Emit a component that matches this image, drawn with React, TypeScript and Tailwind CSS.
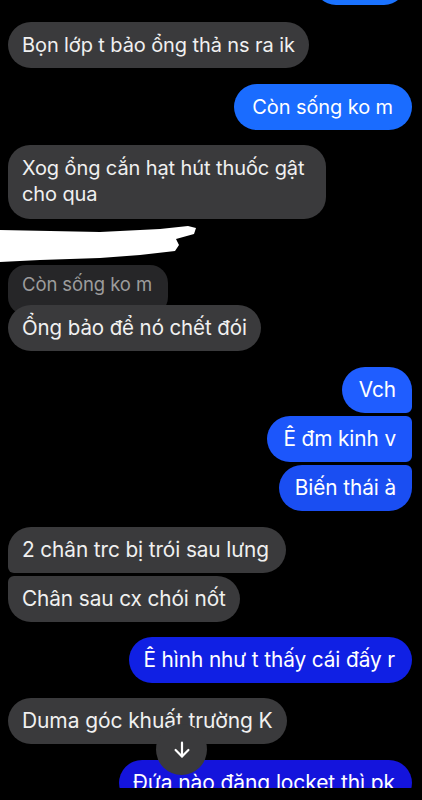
import React from "react";

const font = { fontFamily: "Inter, 'Noto Sans', 'Liberation Sans', sans-serif" };

function Gray({ children, cls = "" }: { children: React.ReactNode; cls?: string }) {
  return (
    <div className={`self-start bg-[#3a3a3c] text-[#f0f0f0] leading-[26px] px-[14px] py-[10px] ${cls}`}>
      {children}
    </div>
  );
}

function Blue({ children, cls = "", color }: { children: React.ReactNode; cls?: string; color: string }) {
  return (
    <div className={`self-end text-white leading-[26px] px-[16px] py-[10px] ${color} ${cls}`}>
      {children}
    </div>
  );
}

export default function App() {
  return (
    <div className="relative w-[422px] h-[800px] overflow-hidden bg-black" style={font}>
      <div className="flex flex-col pl-[8px] pr-[10px] tracking-[-0.1px]">
        {/* partial top bubble */}
        <Blue color="bg-[#1a72ff]" cls="text-[20px] -mt-[41px] w-[92px] h-[46px] rounded-[22px] mr-[6px]">
          <span className="opacity-0">.</span>
        </Blue>

        <Gray cls="text-[20px] mt-[17px] rounded-[23px]">Bọn lớp t bảo ổng thả ns ra ik</Gray>

        <Blue color="bg-[#1a6cff]" cls="text-[20px] mt-[16px] rounded-[23px] pl-[18px] pr-[19px]">Còn sống ko m</Blue>

        <Gray cls="text-[20px] mt-[15px] rounded-[22px] pt-[10px] pb-[12px] pr-[22px]">
          Xog ổng cắn hạt hút thuốc gật
          <br />
          cho qua
        </Gray>

        {/* reply header with redaction scribble */}
        <div className="relative z-10 h-[38px] mt-[6px] -ml-[8px] w-[200px] shrink-0">
          <svg width="200" height="38" viewBox="0 0 200 38" className="block">
            <polygon
              points="0,5 50,6 100,7 160,4 188,1 196,3 194,9 176,14 179,20 175,26 140,30 100,33 40,35 0,37"
              fill="#ffffff"
            />
          </svg>
        </div>
        <div className="self-start relative mt-[2px] h-[50px] w-[160px] bg-[#262628] text-[#9c9c9c] text-[18.5px] leading-[22px] px-[14px] pt-[8px] rounded-[18px]">
          Còn sống ko m
        </div>
        <Gray cls="text-[20.5px] relative -mt-[10px] rounded-[23px]">Ổng bảo để nó chết đói</Gray>

        <Blue color="bg-[#1f5dff]" cls="text-[20.8px] mt-[16px] rounded-tl-[23px] rounded-bl-[23px] rounded-tr-[23px] rounded-br-[6px] pl-[17px]">Vch</Blue>
        <Blue color="bg-[#1c56fb]" cls="text-[20.8px] mt-[3px] rounded-l-[23px] rounded-r-[6px]">Ê đm kinh v</Blue>
        <Blue color="bg-[#1a4ef2]" cls="text-[20.8px] mt-[3px] rounded-tl-[23px] rounded-bl-[23px] rounded-tr-[6px] rounded-br-[23px]">Biến thái à</Blue>

        <Gray cls="text-[20.8px] mt-[16px] rounded-tl-[23px] rounded-tr-[23px] rounded-br-[23px] rounded-bl-[6px] pr-[17px]">2 chân trc bị trói sau lưng</Gray>
        <Gray cls="text-[20.8px] mt-[3px] rounded-tl-[6px] rounded-tr-[23px] rounded-br-[23px] rounded-bl-[23px]">Chân sau cx chói nốt</Gray>

        <Blue color="bg-[#1020e4]" cls="text-[20.8px] mt-[15px] rounded-[23px] pl-[14px] pr-[17px]">Ê hình như t thấy cái đấy r</Blue>

        <div className="relative z-10 self-start mt-[15px]">
          <Gray cls="text-[21px] rounded-[23px]">Duma góc khuất trường K</Gray>
          <div className="absolute left-[148px] top-[26px] w-[51px] h-[51px] rounded-full bg-[#3a3a3c] flex items-center justify-center">
            <svg width="22" height="22" viewBox="0 0 24 24" fill="none" stroke="#ffffff" strokeWidth="2.4" strokeLinecap="round" strokeLinejoin="round">
              <path d="M12 4v15" />
              <path d="M5 12l7 7 7-7" />
            </svg>
          </div>
        </div>

        <Blue color="bg-[#1414dc]" cls="text-[21px] mt-[16px] rounded-[23px] pl-[14px] pr-[17px]">Đứa nào đăng locket thì pk</Blue>
      </div>
      <div className="absolute left-0 right-0 bottom-0 h-[12px] bg-black z-20" />
    </div>
  );
}
